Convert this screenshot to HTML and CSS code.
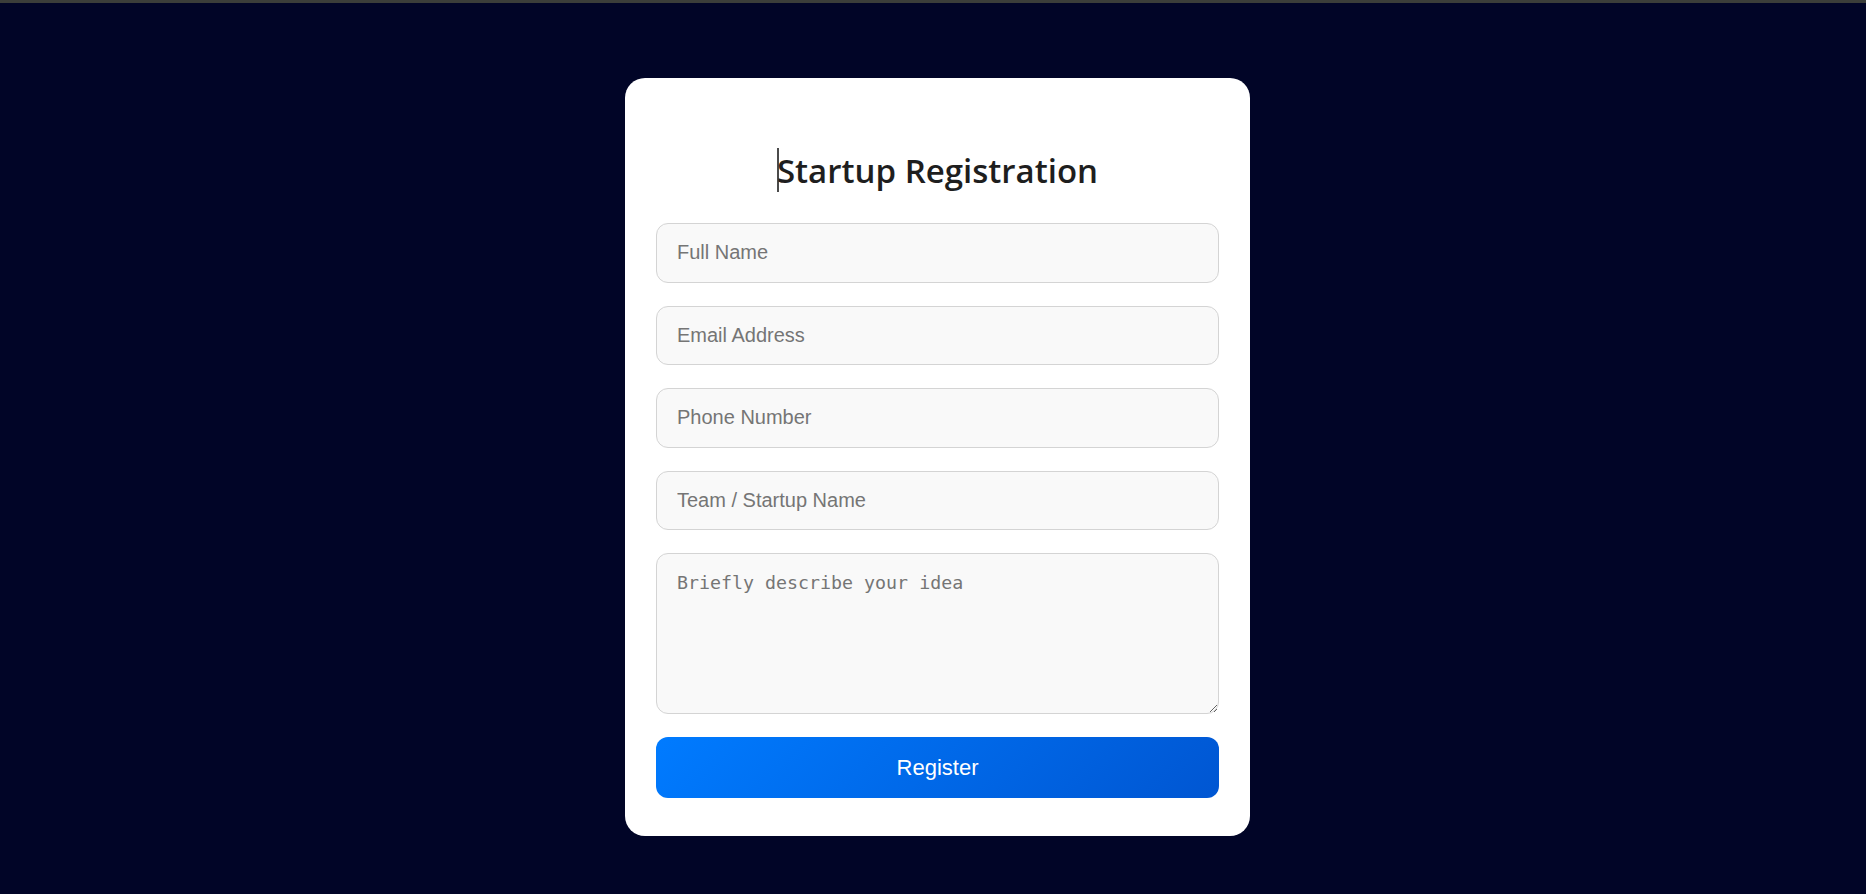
FILE: index.html
```html
<!DOCTYPE html>
<html lang="en">
<head>
<meta charset="utf-8">
<title>Startup Registration</title>
<link rel="stylesheet" href="styles.css">
</head>
<body>
<div class="topbar"></div>
<main class="page">
  <form class="card">
    <h2 class="title"><span class="caret"></span>Startup Registration</h2>
    <input class="field" type="text" placeholder="Full Name">
    <input class="field" type="email" placeholder="Email Address">
    <input class="field" type="tel" placeholder="Phone Number">
    <input class="field" type="text" placeholder="Team / Startup Name">
    <textarea class="field idea" placeholder="Briefly describe your idea"></textarea>
    <button class="submit" type="button">Register</button>
  </form>
</main>
</body>
</html>
```
FILE: styles.css
```css
html, body {
  margin: 0;
  padding: 0;
}

body {
  background: #010527;
  min-height: 894px;
  font-family: "Liberation Sans", Arial, sans-serif;
}

.topbar {
  height: 3px;
  background: #3b3e3a;
}

.page {
  display: flex;
  justify-content: center;
  align-items: flex-start;
  padding: 75px 0 0 9px;
}

.card {
  box-sizing: border-box;
  width: 625px;
  background: #ffffff;
  border-radius: 20px;
  padding: 40px 31px 38px;
  display: flex;
  flex-direction: column;
}

.title {
  margin: 30px 0 31px;
  height: 44px;
  font-family: "Open Sans", "Noto Sans", sans-serif;
  font-weight: 600;
  font-size: 33px;
  line-height: 44px;
  color: #1e1e1e;
  text-align: center;
}

.caret {
  display: inline-block;
  width: 2px;
  height: 44px;
  margin-right: -2px;
  background: #111;
  vertical-align: -9.5px;
  transform: scaleX(0.75);
}

.field {
  box-sizing: border-box;
  display: block;
  width: 100%;
  height: 59.5px;
  margin: 0 0 23px;
  padding: 0 20px;
  border: 1px solid #d4d4d4;
  border-radius: 12px;
  background: #f9f9f9;
  font-family: "Liberation Sans", Arial, sans-serif;
  font-size: 20px;
  color: #222;
  outline: none;
}

.field::placeholder {
  color: #757575;
}

.idea {
  height: 161px;
  padding: 18px 20px;
  font-family: "DejaVu Sans Mono", "Liberation Mono", monospace;
  font-size: 18.3px;
  resize: vertical;
}

.submit {
  display: block;
  width: 100%;
  height: 61px;
  border: none;
  border-radius: 12px;
  background: linear-gradient(135deg, #007bff 0%, #0056d2 100%);
  color: #ffffff;
  font-family: "Liberation Sans", Arial, sans-serif;
  font-size: 22px;
  cursor: pointer;
}
```
